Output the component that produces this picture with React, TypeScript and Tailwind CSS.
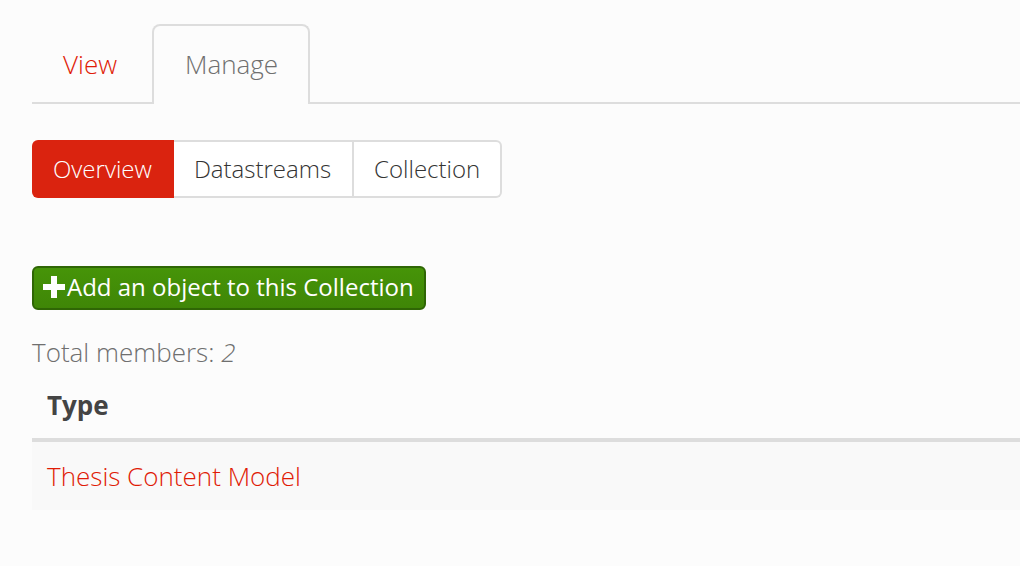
import React from "react";

const tab = "h-20 rounded-t-lg border-2 border-b-0 pt-[18px]";
const section = "h-[58px] border-2 border-l-0 border-[#dddddd] bg-white py-[7px]";

export default function App() {
  return (
    <main className="min-h-screen overflow-hidden bg-[#fcfcfc] pt-6 pl-8 font-['Open_Sans',sans-serif] text-[26px] leading-10 font-light text-[#6f6f6f]">
      <nav aria-label="Object" className="flex h-20 gap-1 border-b-2 border-[#dddddd]">
        <a href="#view" className={`${tab} border-transparent px-[29px] text-[#e01b06]`}>View</a>
        <a href="#manage" aria-current="page" className={`${tab} border-[#dddddd] bg-[#fcfcfc] pr-[30px] pl-[31px]`}>Manage</a>
      </nav>
      <nav aria-label="Manage" className="mt-9 flex text-[24px] text-[#333333]">
        <a href="#overview" aria-current="page" className="h-[58px] rounded-l-md bg-[#da230f] pr-[22px] pl-[21px] py-[9px] text-white">Overview</a>
        <a href="#datastreams" className={`${section} pr-[21px] pl-5`}>Datastreams</a>
        <a href="#collection" className={`${section} rounded-r-md px-5`}>Collection</a>
      </nav>
      <button type="button" className="mt-[68px] flex h-11 items-center rounded-md border-2 border-[#2f6605] bg-linear-to-b from-[#469408] to-[#3f8607] pr-[10px] pb-[2px] pl-[9px] text-[24px] font-normal text-white">
        <svg viewBox="0 0 22 22" className="mr-[2px] h-[22px] w-[22px] fill-white" aria-hidden="true"><path d="M8 0h6v8h8v6h-8v8H8v-8H0V8h8z" /></svg>
        Add an object to this Collection
      </button>
      <p className="mt-[22px]">Total members: <em>2</em></p>
      <table className="w-full border-collapse text-left">
        <thead>
          <tr className="border-b-4 border-[#dddddd]">
            <th scope="col" className="h-[68px] px-[15px] font-bold text-[#444444]">Type</th>
          </tr>
        </thead>
        <tbody>
          <tr className="bg-[#f9f9f9]">
            <td className="h-[70px] px-[15px]"><a href="#thesis-content-model" className="text-[#e01b06]">Thesis Content Model</a></td>
          </tr>
        </tbody>
      </table>
    </main>
  );
}
